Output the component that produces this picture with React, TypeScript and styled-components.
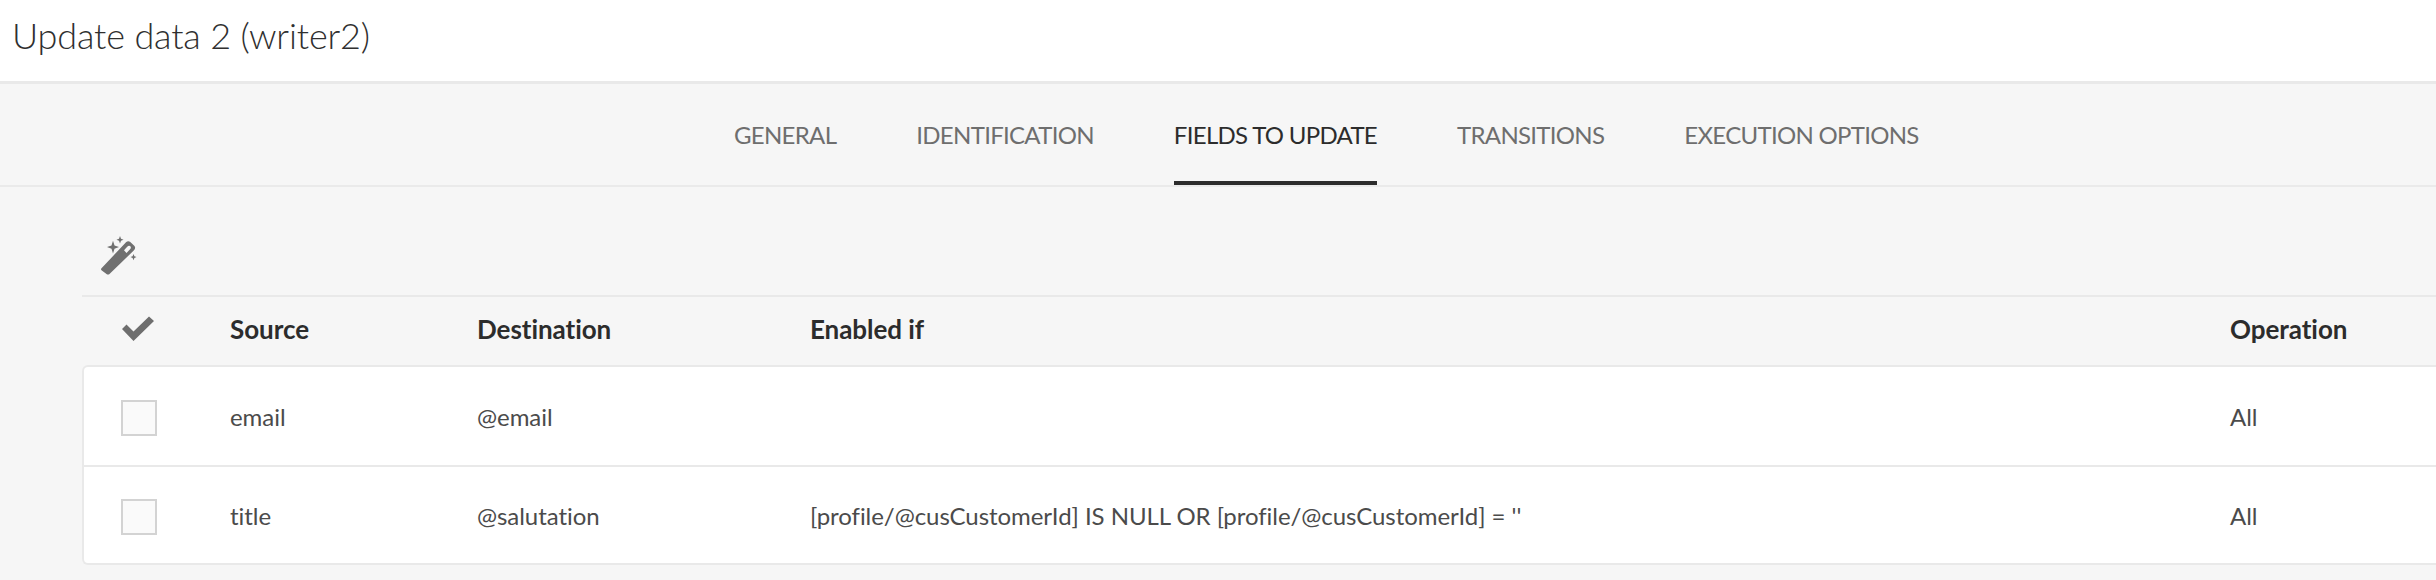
import React from 'react';
import styled, { createGlobalStyle } from 'styled-components';

const GlobalStyle = createGlobalStyle`
  html, body {
    margin: 0;
    height: 100%;
    overflow: hidden;
    background: #f6f6f6;
    font-family: Lato, "Open Sans", sans-serif;
  }
`;

const Header = styled.header`
  height: 81px;
  padding-left: 12px;
  display: flex;
  align-items: center;
  background: #fff;
  border-bottom: 3px solid #e9e9e9;
`;

const Title = styled.h1`
  margin: 0 0 12px;
  font-size: 36px;
  font-weight: 300;
  letter-spacing: -0.15px;
  color: #2f2f2f;
`;

const TabBar = styled.nav`
  height: 101px;
  padding-left: 734px;
  display: flex;
  gap: 80px;
  border-bottom: 2px solid #eaeaea;
`;

const Tab = styled.div<{ $active?: boolean }>`
  height: 101px;
  box-sizing: border-box;
  padding-top: 4px;
  display: flex;
  align-items: center;
  font-size: 24px;
  letter-spacing: -0.7px;
  color: ${(p) => (p.$active ? '#2c2c2c' : '#6e6e6e')};
  border-bottom: 4px solid ${(p) => (p.$active ? '#2c2c2c' : 'transparent')};
`;

const Main = styled.main`
  padding-left: 82px;
`;

const Toolbar = styled.div`
  height: 110px;
  padding: 48px 0 0 18px;
  box-sizing: border-box;
  border-bottom: 2px solid #e9e9e9;
`;

const grid = `
  display: grid;
  grid-template-columns: 148px 247px 333px 1420px 1fr;
  align-items: center;
`;

const HeadRow = styled.div`
  ${grid}
  height: 68px;
  box-sizing: border-box;
  padding-bottom: 5px;
  font-size: 26px;
  font-weight: 700;
  letter-spacing: -0.05px;
  color: #2c2c2c;
`;

const CheckCell = styled.div`
  padding-left: 39px;
  display: flex;
  align-items: center;
`;

const Card = styled.div`
  background: #fff;
  border: 2px solid #e9e9e9;
  border-right: none;
  border-radius: 6px 0 0 6px;
`;

const Row = styled.div`
  ${grid}
  margin-left: -2px;
  height: 98px;
  box-sizing: border-box;
  font-size: 24px;
  letter-spacing: -0.05px;
  color: #4b4b4b;

  & + & {
    border-top: 2px solid #e9e9e9;
  }
`;

const Box = styled.span`
  width: 36px;
  height: 36px;
  margin-top: 4px;
  box-sizing: border-box;
  background: #fafafa;
  border: 2px solid #d3d3d3;
`;

const rows = [
  { source: 'email', destination: '@email', condition: '', operation: 'All' },
  {
    source: 'title',
    destination: '@salutation',
    condition: "[profile/@cusCustomerId] IS NULL OR [profile/@cusCustomerId] = ''",
    operation: 'All',
  },
];

const tabs = ['GENERAL', 'IDENTIFICATION', 'FIELDS TO UPDATE', 'TRANSITIONS', 'EXECUTION OPTIONS'];

const WandIcon = () => (
  <svg width="38" height="40" viewBox="0 0 38 38" fill="#707070" preserveAspectRatio="none">
    <path d="M1.5 31.5 L26 7 Q28 5 30 6.5 L34.5 10.5 Q36 12.5 34 14.5 L9.500 37 Q8 38 6.500 37 L1.500 33.500 Q0.500 32.500 1.500 31.500 Z M27 11.500 L24 14.500 L26.500 17 L30.500 13 Q31.500 11.500 30 10.500 Q28.500 9.800 27 11.500 Z" fillRule="evenodd" />
    <path d="M13 5.500 L14.500 10 L19 11.500 L14.500 13 L13 17.500 L11.500 13 L7 11.500 L11.500 10 Z" />
    <path d="M20 1 L21 3.500 L23.500 4.500 L21 5.500 L20 8 L19 5.500 L16.500 4.500 L19 3.500 Z" />
    <path d="M33.500 18 L34.400 20.100 L36.500 21 L34.400 21.900 L33.500 24 L32.600 21.900 L30.500 21 L32.600 20.100 Z" />
  </svg>
);

const CheckIcon = () => (
  <svg width="34" height="26" viewBox="0 0 34 26" fill="#6e6e6e">
    <path d="M1 13 L5.500 8.500 L12.500 15.500 L28 0.500 L33 5 L12.500 25 Z" />
  </svg>
);

export default function App() {
  return (
    <>
      <GlobalStyle />
      <Header>
        <Title>Update data 2 (writer2)</Title>
      </Header>
      <TabBar>
        {tabs.map((tab) => (
          <Tab key={tab} $active={tab === 'FIELDS TO UPDATE'}>
            {tab}
          </Tab>
        ))}
      </TabBar>
      <Main>
        <Toolbar>
          <WandIcon />
        </Toolbar>
        <HeadRow>
          <CheckCell>
            <CheckIcon />
          </CheckCell>
          <div>Source</div>
          <div>Destination</div>
          <div>Enabled if</div>
          <div>Operation</div>
        </HeadRow>
        <Card>
          {rows.map((row) => (
            <Row key={row.source}>
              <CheckCell>
                <Box />
              </CheckCell>
              <div>{row.source}</div>
              <div>{row.destination}</div>
              <div>{row.condition}</div>
              <div>{row.operation}</div>
            </Row>
          ))}
        </Card>
      </Main>
    </>
  );
}
